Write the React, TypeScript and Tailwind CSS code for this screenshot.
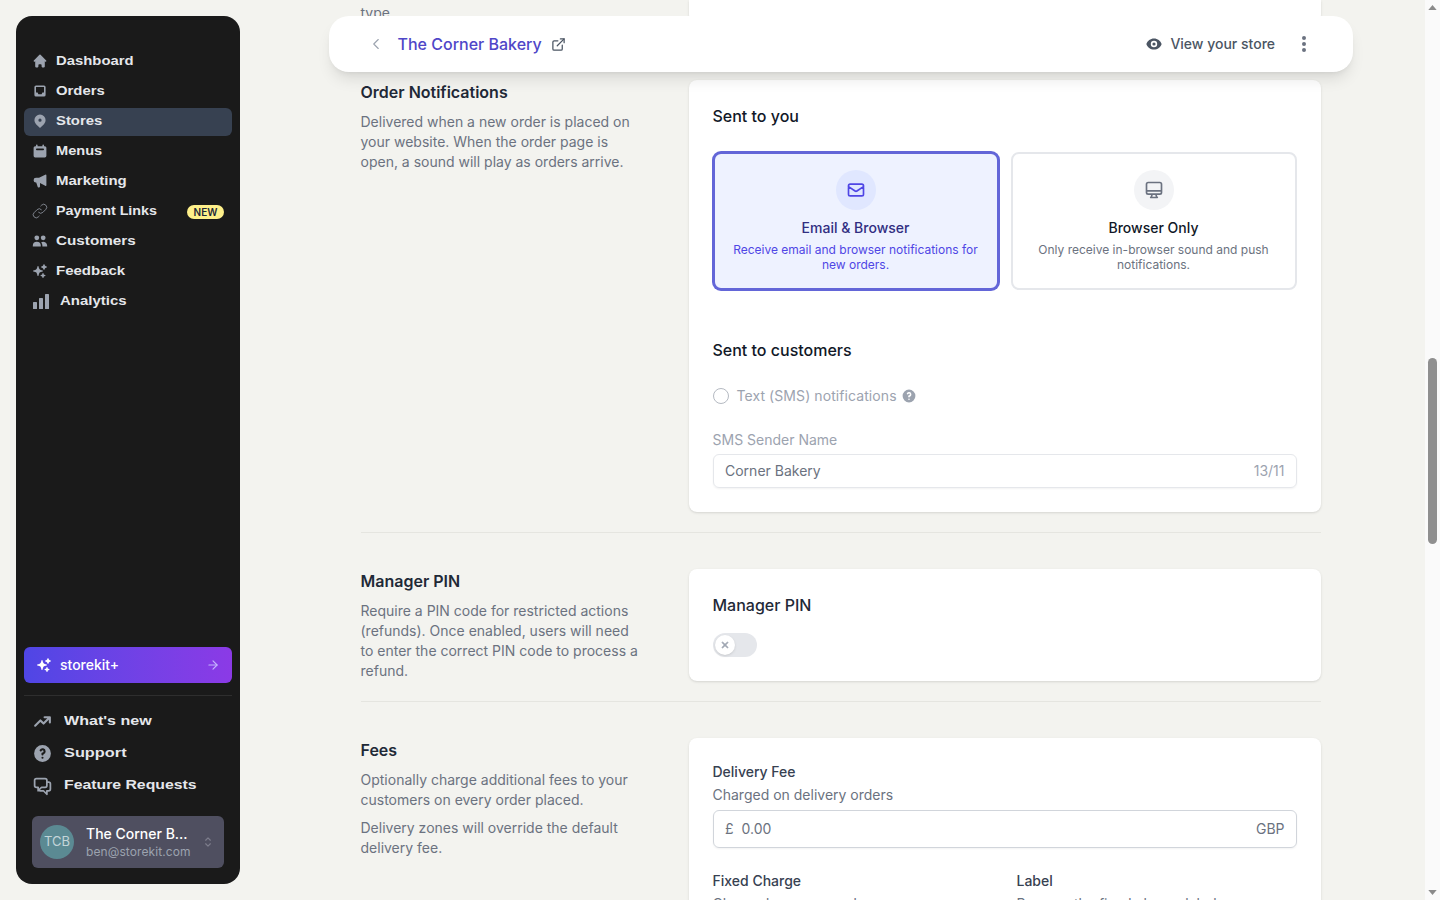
import React from "react";
import {
  HiHome, HiInbox, HiLocationMarker, HiCalendar, HiSpeakerphone, HiOutlineLink, HiUsers,
  HiQuestionMarkCircle, HiOutlineChatAlt2, HiEye, HiDotsVertical, HiOutlineMail,
  HiOutlineDesktopComputer, HiOutlineSelector, HiX, HiTrendingUp,
} from "react-icons/hi";
import { HiSparkles } from "react-icons/hi2";
import { ChevronLeft, ExternalLink, ArrowRight } from "lucide-react";

const navFont = "font-['Liberation_Sans',sans-serif] font-bold text-[13.5px] origin-left whitespace-nowrap";

function NavItem({ icon, label, active, badge, gap, fit }: { icon: React.ReactNode; label: string; active?: boolean; badge?: boolean; gap?: string; fit?: string }) {
  return (
    <div className={`flex items-center h-7 pl-2 pr-2 pb-[3px] rounded-md ${active ? "bg-[#374151]" : ""}`}>
      <span className="w-4 h-4 flex items-center justify-center text-[#9ca3af] text-[18px] shrink-0">{icon}</span>
      <span className={`${gap ?? "ml-2"} pt-px ${navFont} ${fit ?? "scale-x-[1.11]"} text-[#e5e7eb]`}>{label}</span>
      {badge && (
        <span className="ml-auto mt-[3px] h-[14px] w-[37px] rounded-full bg-[#fef08a] text-[#1f2937] text-[10px] font-semibold flex items-center justify-center">NEW</span>
      )}
    </div>
  );
}

function FootItem({ icon, label, fit }: { icon: React.ReactNode; label: string; fit: string }) {
  return (
    <div className="flex items-center h-6 pl-[7px]">
      <span className="w-[22px] h-[22px] flex items-center justify-center text-[#9ca3af] text-[21px] shrink-0">{icon}</span>
      <span className={`ml-[11px] ${navFont} ${fit} text-[#e5e7eb]`}>{label}</span>
    </div>
  );
}

function Sidebar() {
  return (
    <aside className="w-56 m-4 shrink-0 rounded-2xl bg-[#1a1a1a] flex flex-col px-2 pt-[32px] pb-4">
      <nav className="flex flex-col gap-[2px]">
        <NavItem icon={<HiHome />} label="Dashboard" fit="scale-x-[1.1]" />
        <NavItem icon={<HiInbox />} label="Orders" fit="scale-x-[1.1]" />
        <NavItem icon={<HiLocationMarker />} label="Stores" fit="scale-x-[1.1]" active />
        <NavItem icon={<HiCalendar />} label="Menus" fit="scale-x-[1.08]" />
        <NavItem icon={<HiSpeakerphone />} label="Marketing" />
        <NavItem icon={<HiOutlineLink className="text-[18px] shrink-0" strokeWidth={1} />} label="Payment Links" badge fit="scale-x-[1.06]" />
        <NavItem icon={<HiUsers />} label="Customers" fit="scale-x-[1.13]" />
        <NavItem icon={<HiSparkles />} label="Feedback" />
        <NavItem icon={<svg viewBox="0 0 16 16" className="w-4 h-4 ml-[2px] shrink-0" fill="currentColor"><rect x="0" y="9" width="4" height="7" rx="0.6" /><rect x="6" y="5" width="4" height="11" rx="0.6" /><rect x="12" y="1" width="4" height="15" rx="0.6" /></svg>} label="Analytics" gap="ml-3" />
      </nav>
      <div className="mt-auto">
        <div className="h-9 rounded-md bg-gradient-to-r from-[#4f46e5] to-[#8b3ae6] flex items-center pl-3 pr-3 text-white">
          <HiSparkles className="w-4 h-4" />
          <span className="ml-2 text-sm font-medium">storekit+</span>
          <ArrowRight className="ml-auto w-[14px] h-[14px] text-[#c4b5fd]" />
        </div>
        <div className="h-px bg-[#2e2e2e] mt-3 mb-[13px]" />
        <div className="flex flex-col gap-2">
          <FootItem icon={<HiTrendingUp />} label="What's new" fit="scale-x-[1.19]" />
          <FootItem icon={<HiQuestionMarkCircle />} label="Support" fit="scale-x-[1.21]" />
          <FootItem icon={<HiOutlineChatAlt2 />} label="Feature Requests" fit="scale-x-[1.17]" />
        </div>
        <div className="mx-2 mt-[19px] h-[52px] rounded-md bg-[#4f4f60] flex items-center pl-2 pr-[9px]">
          <div className="w-[34px] h-[34px] rounded-full bg-[#5b8a93] text-[#c3d5d9] text-[13px] flex items-center justify-center shrink-0">TCB</div>
          <div className="ml-3 pt-[2px] min-w-0 flex-1">
            <div className="text-sm font-medium leading-[18px] text-white whitespace-nowrap">The Corner B...</div>
            <div className="text-xs leading-[18px] text-[#9ca3af] tracking-[0.1px]">ben@storekit.com</div>
          </div>
          <HiOutlineSelector className="w-[14px] h-[14px] text-[#7d7d8c] shrink-0" />
        </div>
      </div>
    </aside>
  );
}

function Section({ title, children, desc }: { title: string; children: React.ReactNode; desc: React.ReactNode }) {
  return (
    <div className="flex pt-9 border-b border-[#e5e5e0] pb-5">
      <div className="w-[328px] shrink-0 pr-[48px]">
        <h3 className="text-base font-semibold leading-6 text-[#1f2937]">{title}</h3>
        <div className="mt-2 text-sm leading-5 text-[#6b7280]">{desc}</div>
      </div>
      <div className="w-[632px] rounded-lg bg-white shadow-sm">{children}</div>
    </div>
  );
}

function Choice({ selected, icon, title, desc }: { selected?: boolean; icon: React.ReactNode; title: string; desc: string }) {
  return (
    <div className={`h-[138px] rounded-lg border-2 flex flex-col items-center pt-4 px-4 text-center ${selected ? "border-[#6366d8] bg-[#eef2ff] ring-1 ring-[#6366d8]" : "border-[#e5e7eb] bg-white"}`}>
      <div className={`w-10 h-10 rounded-full flex items-center justify-center text-xl ${selected ? "bg-[#e0e7ff] text-[#4f46e5]" : "bg-[#f3f4f6] text-[#6b7280]"}`}>{icon}</div>
      <div className={`mt-2 text-sm font-medium leading-5 ${selected ? "text-[#312e81]" : "text-[#111827]"}`}>{title}</div>
      <div className={`mt-[4px] text-xs leading-[15px] ${selected ? "text-[#4f46e5]" : "text-[#6b7280]"}`}>{desc}</div>
    </div>
  );
}

function Main() {
  return (
    <main className="relative flex-1 min-w-0 overflow-hidden">
      <div className="ml-[104.5px] w-[960.5px]">
        <div className="flex h-[44px] border-b border-[#e5e5e0]">
          <div className="w-[328px] text-sm leading-5 text-[#6b7280] pt-[3px]">type</div>
          <div className="w-[632px] h-[23px] bg-white rounded-b-lg shadow-sm" />
        </div>
        <Section
          title="Order Notifications"
          desc={<p>Delivered when a new order is placed on your website. When the order page is open, a sound will play as orders arrive.</p>}
        >
          <div className="px-6 pt-[26px] pb-6 h-[432px]">
            <h4 className="text-base font-medium leading-5 text-[#111827]">Sent to you</h4>
            <div className="mt-[26px] grid grid-cols-2 gap-3">
              <Choice selected icon={<HiOutlineMail />} title="Email &amp; Browser" desc="Receive email and browser notifications for new orders." />
              <Choice icon={<HiOutlineDesktopComputer />} title="Browser Only" desc="Only receive in-browser sound and push notifications." />
            </div>
            <h4 className="mt-[50px] text-base font-medium leading-5 text-[#111827]">Sent to customers</h4>
            <div className="mt-[26px] flex items-center h-5 text-sm text-[#9ca3af]">
              <span className="w-4 h-4 rounded-full border border-[#b5bac2] bg-white" />
              <span className="ml-2 tracking-[0.08px]">Text (SMS) notifications</span>
              <HiQuestionMarkCircle className="ml-1 w-4 h-4 text-[#9ca3af]" />
            </div>
            <div className="mt-[24px] text-sm leading-5 text-[#9ca3af]">SMS Sender Name</div>
            <div className="mt-[4px] h-[34px] rounded-md border border-[#e5e7eb] shadow-xs flex items-center justify-between pl-[11.5px] pr-[11px] text-sm text-[#6b7280]">
              <span>Corner Bakery</span>
              <span className="text-[#9ca3af]">13/11</span>
            </div>
          </div>
        </Section>
        <Section
          title="Manager PIN"
          desc={<p>Require a PIN code for restricted actions (refunds). Once enabled, users will need to enter the correct PIN code to process a refund.</p>}
        >
          <div className="px-6 pt-[26px] h-[112px]">
            <h4 className="text-base font-medium leading-5 text-[#1f2937]">Manager PIN</h4>
            <div className="mt-[18px] w-11 h-6 rounded-full bg-[#e5e7eb] p-[2px]">
              <div className="w-5 h-5 rounded-full bg-white shadow flex items-center justify-center">
                <HiX className="w-[10px] h-[10px] text-[#9ca3af]" strokeWidth={1.5} />
              </div>
            </div>
          </div>
        </Section>
        <Section
          title="Fees"
          desc={
            <>
              <p>Optionally charge additional fees to your customers on every order placed.</p>
              <p className="mt-2">Delivery zones will override the default delivery fee.</p>
            </>
          }
        >
          <div className="px-6 pt-[24px]">
            <div className="text-sm font-medium leading-5 text-[#374151]">Delivery Fee</div>
            <div className="mt-[3px] text-sm leading-5 text-[#6b7280]">Charged on delivery orders</div>
            <div className="mt-[5px] h-[38px] rounded-md border border-[#d1d5db] shadow-xs flex items-center justify-between pl-[11.5px] pr-[11px] text-sm text-[#6b7280]">
              <span><span>£</span><span className="ml-2">0.00</span></span>
              <span>GBP</span>
            </div>
            <div className="mt-[23px] grid grid-cols-2 gap-6">
              <div>
                <div className="text-sm font-medium leading-5 text-[#374151]">Fixed Charge</div>
                <div className="mt-[3px] text-sm leading-5 text-[#6b7280]">Charged on every order</div>
              </div>
              <div>
                <div className="text-sm font-medium leading-5 text-[#374151]">Label</div>
                <div className="mt-[3px] text-sm leading-5 text-[#6b7280]">Rename the fixed charge label</div>
              </div>
            </div>
            <div className="h-24" />
          </div>
        </Section>
      </div>
      <div className="absolute left-[73px] top-4 w-[1024px] h-14 rounded-[20px] bg-white shadow-lg flex items-center pl-[37.5px] pr-[39px]">
        <ChevronLeft className="w-[18px] h-[18px] text-[#9ca3af]" strokeWidth={1.5} />
        <span className="ml-[13px] text-base font-medium text-[#4f46c8]">The Corner Bakery</span>
        <ExternalLink className="ml-[9px] w-[15px] h-[15px] text-[#4b5563]" strokeWidth={2} />
        <HiEye className="ml-auto w-4 h-4 text-[#4b5563]" />
        <span className="ml-2 text-sm font-medium text-[#4b5563]">View your store</span>
        <HiDotsVertical className="ml-[19px] w-5 h-5 text-[#6b7280]" />
      </div>
    </main>
  );
}

function Scrollbar() {
  return (
    <div className="w-[15px] shrink-0 bg-[#fafafa] flex flex-col items-center">
      <div className="h-[15px] flex items-center justify-center">
        <svg viewBox="0 0 10 6" className="w-[9px] h-[5px]" fill="#8a8a8a"><path d="M5 0l5 6H0z" /></svg>
      </div>
      <div className="mt-[343px] w-[9px] h-[186px] rounded-full bg-[#8f8f8f]" />
      <div className="mt-auto h-[15px] flex items-center justify-center">
        <svg viewBox="0 0 10 6" className="w-[9px] h-[5px]" fill="#8a8a8a"><path d="M5 6L0 0h10z" /></svg>
      </div>
    </div>
  );
}

export default function App() {
  return (
    <div className="h-screen flex overflow-hidden bg-[#f3f3ef] font-['Inter',sans-serif]">
      <Sidebar />
      <Main />
      <Scrollbar />
    </div>
  );
}
